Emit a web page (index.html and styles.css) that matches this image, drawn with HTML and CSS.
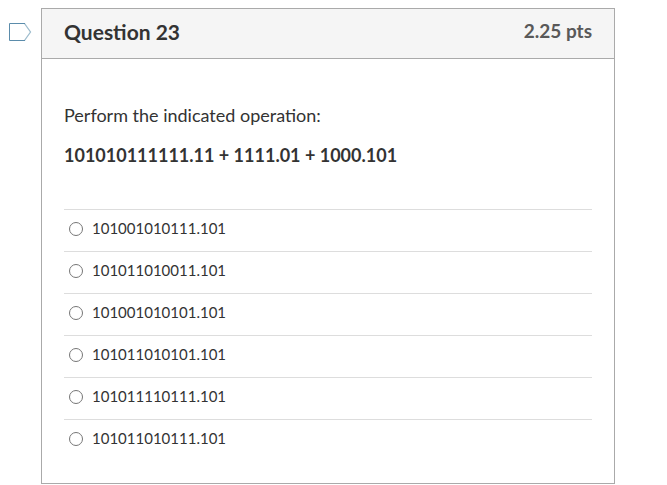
FILE: index.html
```html
<!DOCTYPE html>
<html lang="en">

<head>
    <meta charset="UTF-8">
    <meta name="viewport" content="width=device-width, initial-scale=1.0">
    <title>Question 23</title>
    <link rel="stylesheet" href="styles.css">
</head>

<body>
    <main class="quiz">
        <button class="flag" type="button" aria-label="Flag question">
            <svg width="24" height="20" viewBox="0 0 24 20">
                <path d="M16.5 1.5L22.5 10L16.5 18.5" fill="none" stroke="#9dbccd" stroke-width="1.3" />
                <path d="M17 1.5H1.5V18.5H17" fill="none" stroke="#5b8cab" />
            </svg>
        </button>

        <form class="question">
            <header class="question-header">
                <h1>Question 23</h1>
                <span class="points">2.25 pts</span>
            </header>

            <div class="question-body">
                <p>Perform the indicated operation:</p>
                <p><strong>101010111111.11 + 1111.01 + 1000.101</strong></p>

                <div class="answers">
                    <label class="answer"><input type="radio" name="answer" value="1"><span>101001010111.101</span></label>
                    <label class="answer"><input type="radio" name="answer" value="2"><span>101011010011.101</span></label>
                    <label class="answer"><input type="radio" name="answer" value="3"><span>101001010101.101</span></label>
                    <label class="answer"><input type="radio" name="answer" value="4"><span>101011010101.101</span></label>
                    <label class="answer"><input type="radio" name="answer" value="5"><span>101011110111.101</span></label>
                    <label class="answer"><input type="radio" name="answer" value="6"><span>101011010111.101</span></label>
                </div>
            </div>
        </form>
    </main>
</body>

</html>
```
FILE: styles.css
```css
:root {
    --col-text: #333333;
    --col-border: #aaaaaa;
    --col-line: #dddddd;
    --col-header: #f5f5f5;
}

* {
    box-sizing: border-box;
}

body {
    margin: 0;
    font-family: Lato, "Liberation Sans", sans-serif;
    font-size: 18px;
    line-height: 26px;
    color: var(--col-text);
    background: #fff;
}

.quiz {
    display: flex;
    align-items: flex-start;
    gap: 9px;
    padding: 8px 52px 0 8px;
}

.flag {
    margin: 14px 0 0;
    padding: 0;
    border: none;
    background: none;
    cursor: pointer;
}

.flag svg {
    display: block;
}

.question {
    flex: 1;
    border: 1px solid var(--col-border);
}

.question-header {
    display: flex;
    justify-content: space-between;
    padding: 10px 22px 13px;
    font-weight: bold;
    background: var(--col-header);
    border-bottom: 1px solid var(--col-border);
}

.question-header h1 {
    margin: 0;
    font-size: 21px;
}

.points {
    font-size: 19px;
    line-height: 24px;
    color: #595959;
}

.question-body {
    padding: 43px 22px 22px;
}

.question-body p {
    margin: 0 0 14px;
}

.answers {
    margin-top: 41px;
}

.answer {
    display: flex;
    align-items: center;
    gap: 9px;
    height: 42px;
    padding: 0 0 4px 5px;
    border-top: 1px solid var(--col-line);
    font-size: 15px;
}

.answer input {
    width: 14px;
    height: 14px;
    margin: 0;
}

.answer span {
    padding-bottom: 2px;
}
```
